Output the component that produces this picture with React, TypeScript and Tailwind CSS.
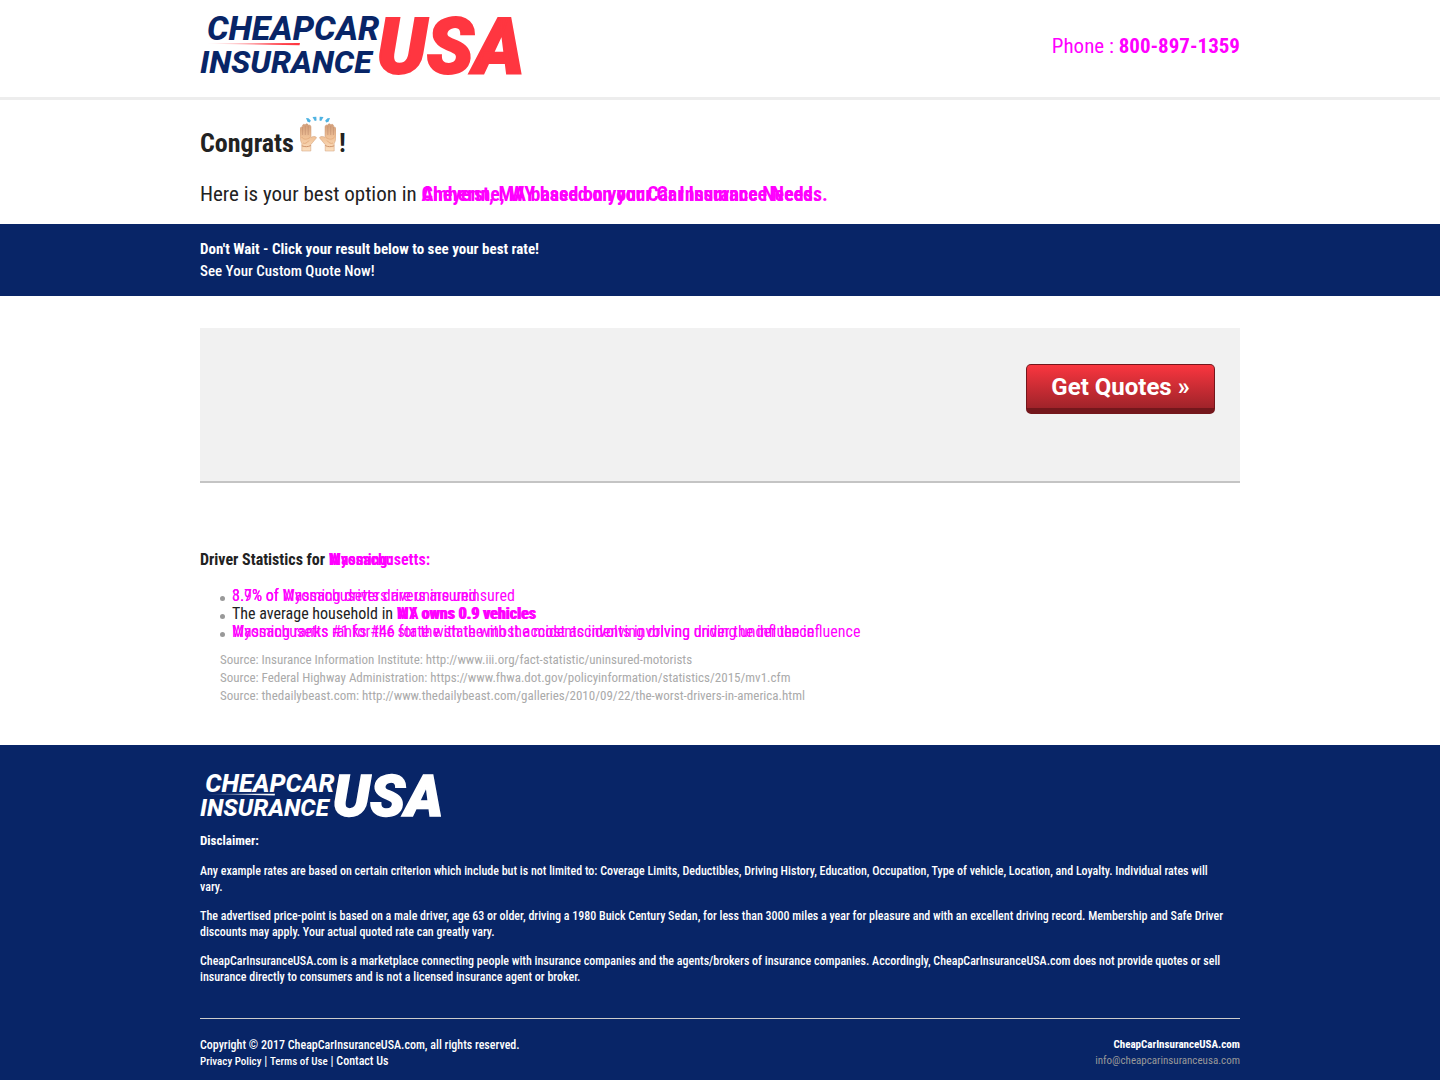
import React from 'react';

function Logo({ light = false, className }: { light?: boolean; className: string }) {
  const id = light ? 'swoosh-light' : 'swoosh-color';
  const main = light ? '#ffffff' : '#082567';
  const accent = light ? '#ffffff' : '#ff3640';
  return (
    <svg viewBox="0 0 320 62" className={className} role="img" aria-label="Cheap Car Insurance USA">
      <defs>
        <linearGradient id={id} x1="0" x2="1" y1="0" y2="0">
          <stop offset="0" stopColor={accent} stopOpacity="0" />
          <stop offset="0.7" stopColor={accent} stopOpacity="0.9" />
          <stop offset="1" stopColor={accent} />
        </linearGradient>
      </defs>
      <g fontFamily="'Roboto', sans-serif" fontStyle="italic" fontWeight="800">
        <text x="7" y="26" fontSize="34" fill={main}>CHEAPCAR</text>
        <text x="0" y="59" fontSize="32" fill={main}>INSURANCE</text>
        <text x="177" y="59" fontSize="77" fontWeight="900" fill={accent} stroke={accent} strokeWidth="2">USA</text>
      </g>
      <path d="M7 29.4L100 29L99.500 31.200L7 29.800Z" fill={`url(#${id})`} />
    </svg>
  );
}

function Hand() {
  return (
    <g>
      <path d="M1.800 35V27.500C.4 25 0 22 0 19V13C0 11.400 1.400 10.600 2.400 11V9.800C2.600 8.200 4.600 7.700 5.200 9C5.600 7.400 7.900 7.400 8.200 9.200C9.400 8.400 11 9.200 11 11V21.500C12.500 20.200 15 20 16.300 21.200C16.800 22 15.500 23 14.500 24.200C13 26 11.800 27.500 10.800 28.500V35Z" fill="url(#skin)" stroke="#cf9a74" strokeWidth=".5" />
      <path d="M2.600 11V19M5.300 10V19M8.200 10V19" stroke="#c08c6b" strokeWidth=".6" fill="none" />
      <path d="M1.500 21C4 24 7 23.500 10 21.500M3 27C5 28 7 27 9 24.500" stroke="#e2a97c" strokeWidth=".9" fill="none" />
      <path d="M1.800 29.800C5 31 8 31 10.800 29.500" stroke="#c98f67" strokeWidth=".9" fill="none" />
    </g>
  );
}

function RaisedHands() {
  return (
    <svg viewBox="0 0 36 36" className="size-9" role="img" aria-label="raised hands">
      <defs>
        <linearGradient id="skin" x1="0" x2="0" y1="0" y2="1">
          <stop offset="0" stopColor="#d09c78" />
          <stop offset="0.5" stopColor="#f0c298" />
          <stop offset="1" stopColor="#fce0c0" />
        </linearGradient>
      </defs>
      <Hand />
      <g transform="translate(36 0) scale(-1 1)">
        <Hand />
      </g>
      <g fill="#4fb3e2">
        <path d="M6 2L8.500 2.200L10.800 4.500L9.800 6.600L7.500 5.800Z" />
        <path d="M12.500 1L16.300 .8L16.500 4.500L14.800 5Z" />
        <path d="M23.500 1L19.700 .8L19.500 4.500L21.200 5Z" />
        <path d="M30 2L27.500 2.200L25.200 4.500L26.200 6.600L28.500 5.800Z" />
      </g>
    </svg>
  );
}

/** Two alternative texts drawn in the same grid cell. */
function Overlap({ a, b }: { a: string; b: string }) {
  return (
    <span className="inline-grid whitespace-nowrap text-[#ff00ff]">
      <span className="col-start-1 row-start-1">{a}</span>
      <span className="col-start-1 row-start-1">{b}</span>
    </span>
  );
}

const wrap = 'mx-auto w-full max-w-[1040px]';

export default function App() {
  return (
    <div className="bg-white font-['Roboto_Condensed','Roboto',sans-serif] text-[#222222]">
      <header className="border-b-[3px] border-[#ededed]">
        <div className={`${wrap} flex items-start justify-between pt-3.5 pb-[21px]`}>
          <a href="#home">
            <Logo className="block w-80 overflow-visible" />
          </a>
          <p className="pt-[18px] text-[21px] leading-7 text-[#ff00ff]">
            Phone : <strong className="font-bold">800-897-1359</strong>
          </p>
        </div>
      </header>

      <main>
        <section className={`${wrap} pt-4 pb-[15px]`}>
          <h1 className="flex items-start text-[26px] leading-[54px] font-bold">
            Congrats
            <span className="mr-[3px] ml-1.5">
              <RaisedHands />
            </span>
            !
          </h1>
          <p className="mt-[9px] text-[21px] leading-[30px]">
            Here is your best option in{' '}
            <strong className="text-[20px] font-bold">
              <Overlap
                a="Amherst, MA based on your Car Insurance Needs."
                b="Cheyenne, WY based on your Car Insurance Needs."
              />
            </strong>
          </p>
        </section>

        <section className="bg-[#082567] py-3.5 text-white">
          <div className={`${wrap} text-[15px] leading-[22px]`}>
            <h2 className="font-bold">Don't Wait - Click your result below to see your best rate!</h2>
            <p className="font-medium">See Your Custom Quote Now!</p>
          </div>
        </section>

        <section className={`${wrap} pt-8`}>
          <div className="flex justify-end border-b-2 border-[#c4c4c4] bg-[#f1f1f1] px-[25px] pt-9 pb-[67px]">
            <button
              type="button"
              className="h-[50px] w-[189px] rounded-[5px] border border-b-[6px] border-[#74171c] bg-linear-to-b from-[#fa363f] to-[#a0232a] font-['Roboto'] text-2xl leading-none font-bold text-white"
            >
              Get Quotes »
            </button>
          </div>
        </section>

        <section className={`${wrap} pt-[66px] pb-10`}>
          <h3 className="text-[16px] leading-[22px] font-bold">
            Driver Statistics for <Overlap a="Wyoming:" b="Massachusetts:" />
          </h3>
          <ul className="mt-4 ml-5 list-none text-[16px] leading-[18px]">
            {[
              <Overlap key="u" a="8.7% of Wyoming drivers are uninsured" b="3.9% of Massachusetts drivers are uninsured" />,
              <>
                The average household in{' '}
                <b>
                  <Overlap a="WY owns 0.9 vehicles" b="MA owns 0.9 vehicles" />
                </b>
              </>,
              <Overlap
                key="r"
                a="Wyoming ranks #1 for the state with the most accidents involving driving under the influence"
                b="Massachusetts ranks #46 for the state with the most accidents involving driving under the influence"
              />,
            ].map((item, i) => (
              <li key={i} className="flex items-center gap-[7px]">
                <span className="mt-1 size-[5px] shrink-0 rounded-full bg-[#999999]" />
                <span className="whitespace-nowrap">{item}</span>
              </li>
            ))}
          </ul>
          <div className="mt-2.5 ml-5 text-[13px] leading-[18px] text-[#aaaaaa]">
            <p>Source: Insurance Information Institute: http://www.iii.org/fact-statistic/uninsured-motorists</p>
            <p>Source: Federal Highway Administration: https://www.fhwa.dot.gov/policyinformation/statistics/2015/mv1.cfm</p>
            <p>Source: thedailybeast.com: http://www.thedailybeast.com/galleries/2010/09/22/the-worst-drivers-in-america.html</p>
          </div>
        </section>
      </main>

      <footer className="bg-[#082567] pt-[27px] pb-2.5 text-[12px] leading-4 font-medium text-white">
        <div className={wrap}>
          <Logo light className="block w-60 overflow-visible" />
          <p className="mt-3.5 text-[13px] font-bold">Disclaimer:</p>
          <div className="mt-3.5 space-y-[13px]">
            <p>
              Any example rates are based on certain criterion which include but is not limited to: Coverage Limits,
              Deductibles, Driving History, Education, Occupation, Type of vehicle, Location, and Loyalty. Individual
              rates will
              <br />
              vary.
            </p>
            <p>
              The advertised price-point is based on a male driver, age 63 or older, driving a 1980 Buick Century Sedan,
              for less than 3000 miles a year for pleasure and with an excellent driving record. Membership and Safe
              Driver discounts may apply. Your actual quoted rate can greatly vary.
            </p>
            <p>
              CheapCarInsuranceUSA.com is a marketplace connecting people with insurance companies and the
              agents/brokers of insurance companies. Accordingly, CheapCarInsuranceUSA.com does not provide quotes or
              sell insurance directly to consumers and is not a licensed insurance agent or broker.
            </p>
          </div>
          <div className="mt-[33px] flex justify-between border-t border-[#cccccc] pt-[18px]">
            <div>
              <p>Copyright © 2017 CheapCarInsuranceUSA.com, all rights reserved.</p>
              <p>
                <a href="#privacy" className="text-[11px]">Privacy Policy</a> |{' '}
                <a href="#terms" className="text-[11px]">Terms of Use</a> | <a href="#contact">Contact Us</a>
              </p>
            </div>
            <div className="text-right text-[11px]">
              <p className="font-bold">CheapCarInsuranceUSA.com</p>
              <a href="mailto:info@cheapcarinsuranceusa.com" className="font-normal text-[#999999]">
                info@cheapcarinsuranceusa.com
              </a>
            </div>
          </div>
        </div>
      </footer>
    </div>
  );
}
